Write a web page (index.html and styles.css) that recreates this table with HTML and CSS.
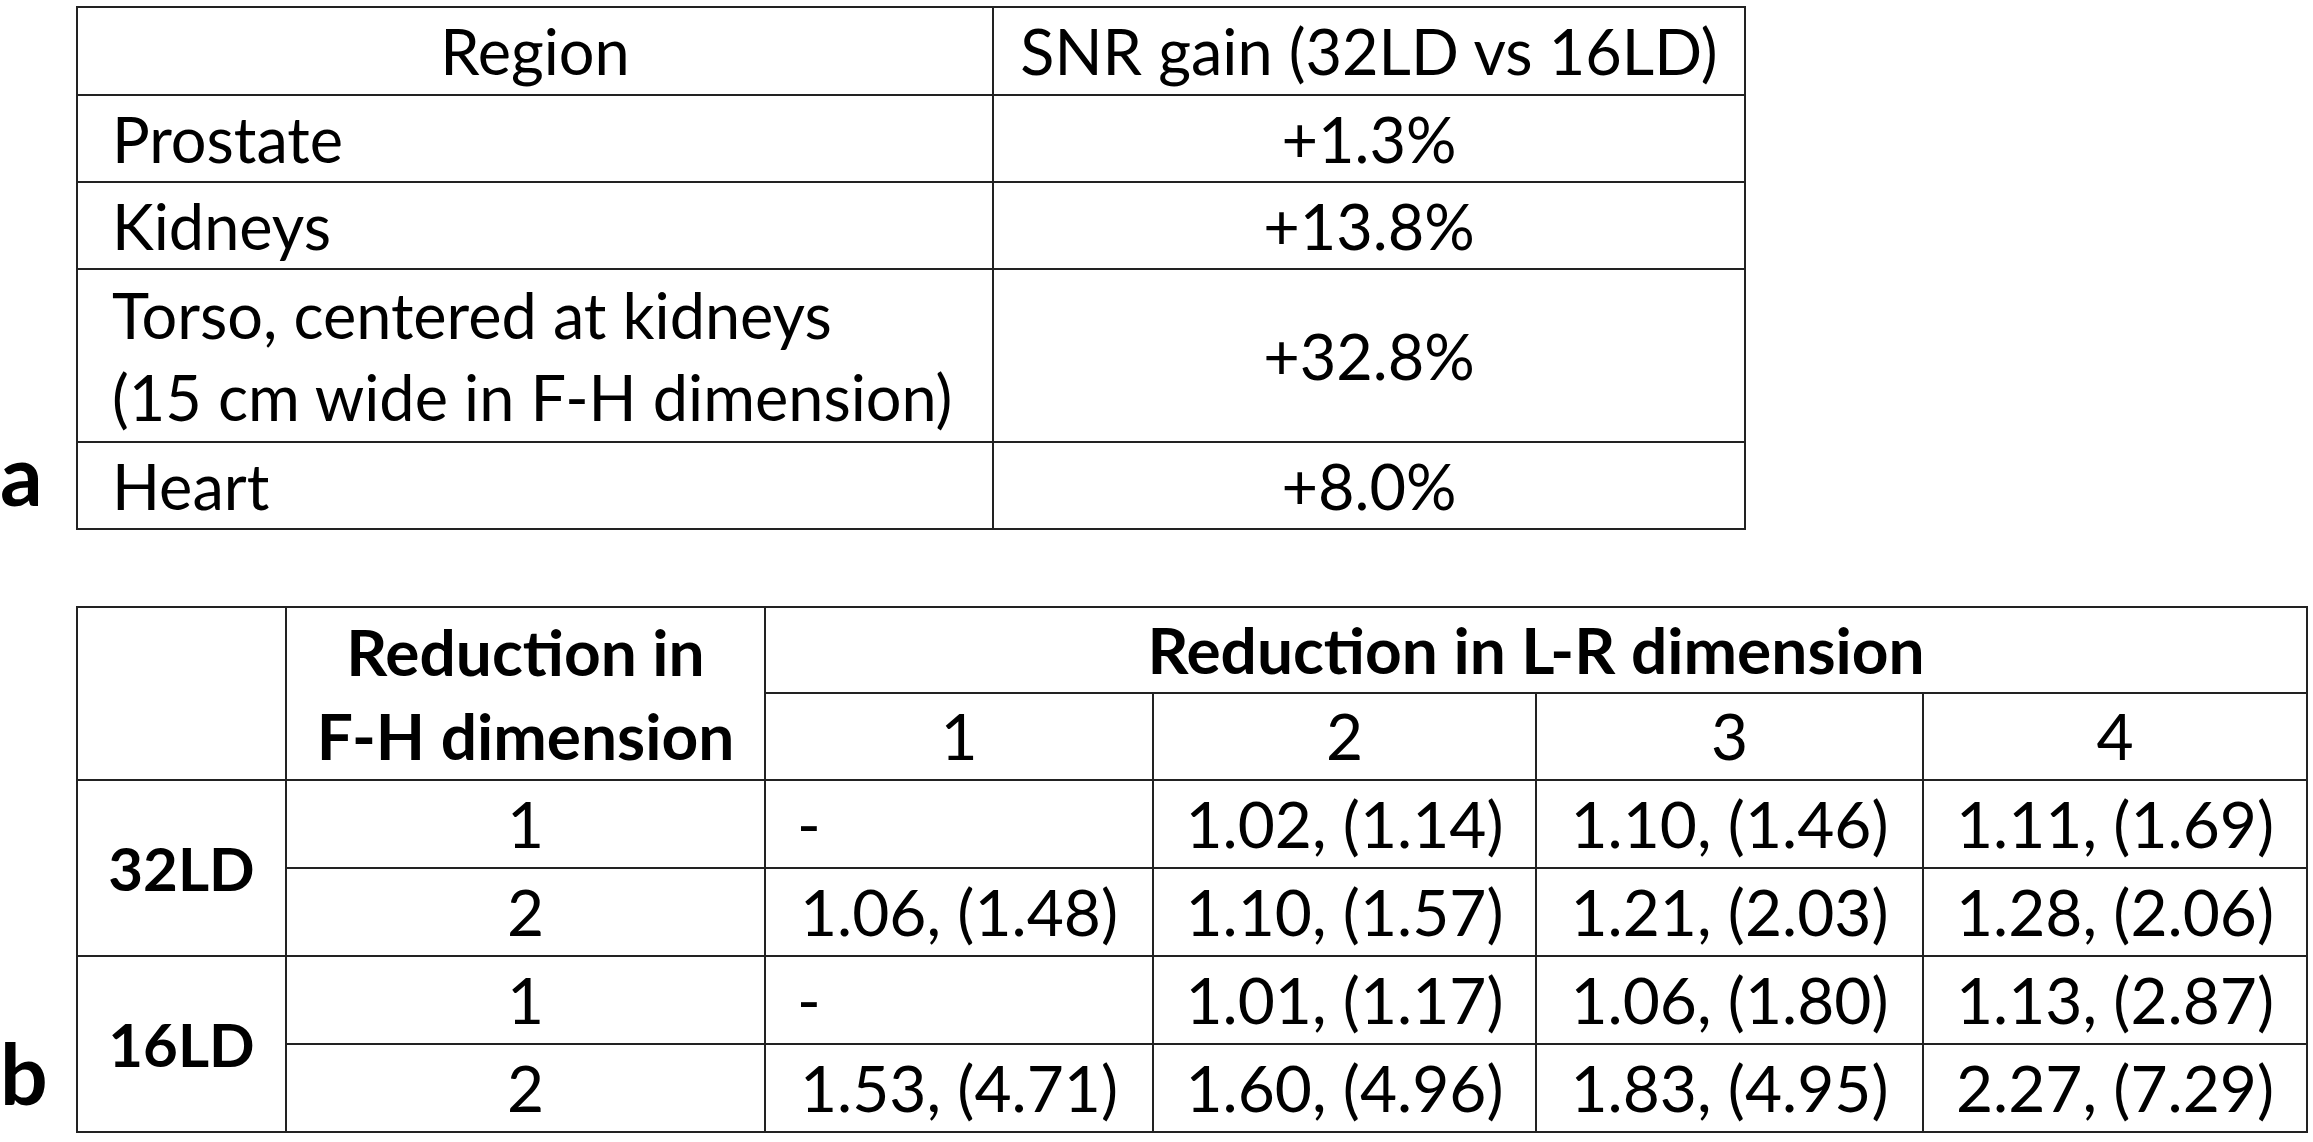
FILE: index.html
```html
<!DOCTYPE html>
<html lang="en">
<head>
<meta charset="utf-8">
<title>SNR gain and g-factor tables</title>
<link rel="stylesheet" href="styles.css">
</head>
<body>
<main class="page">
  <section class="panel panel-a">
    <div class="label label-a">a</div>
    <table class="tbl tbl-a">
      <colgroup>
        <col class="col-region">
        <col class="col-gain">
      </colgroup>
      <tr class="row-h">
        <th class="c">Region</th>
        <th class="c">SNR gain (32LD vs 16LD)</th>
      </tr>
      <tr class="row-1">
        <td class="l">Prostate</td>
        <td class="c">+1.3%</td>
      </tr>
      <tr class="row-1">
        <td class="l">Kidneys</td>
        <td class="c">+13.8%</td>
      </tr>
      <tr class="row-2">
        <td class="l">Torso, centered at kidneys<br>(15 cm wide in F-H dimension)</td>
        <td class="c">+32.8%</td>
      </tr>
      <tr class="row-1">
        <td class="l">Heart</td>
        <td class="c">+8.0%</td>
      </tr>
    </table>
  </section>

  <section class="panel panel-b">
    <div class="label label-b">b</div>
    <table class="tbl tbl-b">
      <colgroup>
        <col class="col-coil">
        <col class="col-fh">
        <col class="col-lr1">
        <col class="col-lr2">
        <col class="col-lr3">
        <col class="col-lr4">
      </colgroup>
      <tr class="row-b-h1">
        <th rowspan="2" class="c"></th>
        <th rowspan="2" class="c bold">Reduction in<br>F-H dimension</th>
        <th colspan="4" class="c bold">Reduction in L-R dimension</th>
      </tr>
      <tr class="row-b-h2">
        <th class="c">1</th>
        <th class="c">2</th>
        <th class="c">3</th>
        <th class="c">4</th>
      </tr>
      <tr class="row-b">
        <th rowspan="2" class="c bold coil">32LD</th>
        <td class="c">1</td>
        <td class="l">-</td>
        <td class="c">1.02, (1.14)</td>
        <td class="c">1.10, (1.46)</td>
        <td class="c">1.11, (1.69)</td>
      </tr>
      <tr class="row-b">
        <td class="c">2</td>
        <td class="c">1.06, (1.48)</td>
        <td class="c">1.10, (1.57)</td>
        <td class="c">1.21, (2.03)</td>
        <td class="c">1.28, (2.06)</td>
      </tr>
      <tr class="row-b">
        <th rowspan="2" class="c bold coil">16LD</th>
        <td class="c">1</td>
        <td class="l">-</td>
        <td class="c">1.01, (1.17)</td>
        <td class="c">1.06, (1.80)</td>
        <td class="c">1.13, (2.87)</td>
      </tr>
      <tr class="row-b">
        <td class="c">2</td>
        <td class="c">1.53, (4.71)</td>
        <td class="c">1.60, (4.96)</td>
        <td class="c">1.83, (4.95)</td>
        <td class="c">2.27, (7.29)</td>
      </tr>
    </table>
  </section>
</main>
</body>
</html>
```

FILE: styles.css
```css
html, body {
  margin: 0;
  padding: 0;
  background: #ffffff;
}

body {
  font-family: Lato, "Open Sans", "Liberation Sans", sans-serif;
  color: #000000;
}

.page {
  display: flex;
  flex-direction: column;
  gap: 76px;
  padding-top: 6px;
}

.panel {
  display: flex;
  align-items: flex-end;
}

.label {
  width: 76px;
  flex: none;
  font-family: Lato, "Liberation Sans", sans-serif;
  font-weight: 700;
  font-size: 84px;
  line-height: 1;
}

.label-a {
  padding-bottom: 14px;
}

.label-b {
  padding-bottom: 18px;
}

.tbl {
  border-collapse: collapse;
  table-layout: fixed;
  line-height: 1.2;
}

.tbl th,
.tbl td {
  border: 2px solid #222222;
  padding: 0;
  vertical-align: middle;
  font-weight: 400;
  white-space: nowrap;
}

.tbl .c {
  text-align: center;
}

.tbl .l {
  text-align: left;
  padding-left: 34px;
}

.tbl .bold {
  font-weight: 700;
}

/* table a */
.tbl-a {
  width: 1668px;
  font-size: 63px;
}

.col-region {
  width: 916px;
}

.col-gain {
  width: 752px;
}

.tbl-a .row-h {
  height: 88px;
}

.tbl-a .row-1 {
  height: 87px;
}

.tbl-a .row-2 {
  height: 173px;
}

.tbl-a .row-2 .l {
  line-height: 82px;
}

/* table b */
.tbl-b {
  width: 2230px;
  font-size: 64px;
}

.tbl-b .l {
  padding-left: 31px;
}

.tbl-b .coil {
  font-size: 60px;
}

.col-coil {
  width: 209px;
}

.col-fh {
  width: 479px;
}

.col-lr1 {
  width: 388px;
}

.col-lr2 {
  width: 383px;
}

.col-lr3 {
  width: 387px;
}

.col-lr4 {
  width: 384px;
}

.row-b-h1 {
  height: 84px;
}

.row-b-h2 {
  height: 87px;
}

.row-b {
  height: 88px;
}

.tbl-b .row-b-h1 th {
  line-height: 84px;
}
```
